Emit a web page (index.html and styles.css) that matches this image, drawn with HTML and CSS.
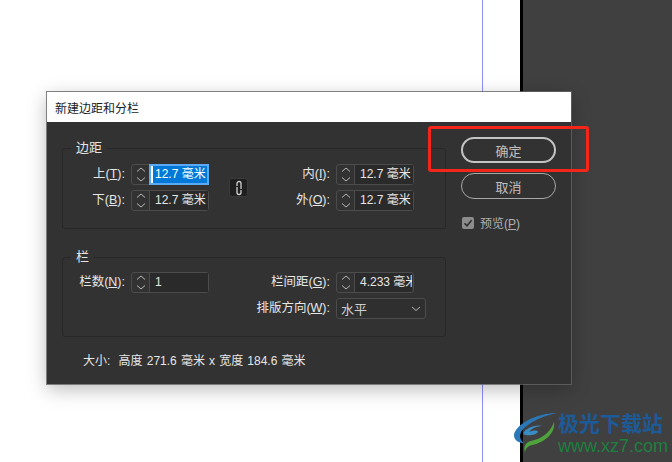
FILE: index.html
```html
<!DOCTYPE html>
<html lang="zh-CN">
<head>
    <meta charset="UTF-8">
    <title>新建边距和分栏</title>
    <link rel="stylesheet" href="styles.css">
</head>
<body>
    <div class="stage">
        <div class="page"><div class="guide"></div></div>
        <div class="pasteboard"></div>

        <div class="dialog">
            <div class="title">新建边距和分栏</div>
            <div class="content">
                <div class="left">
                    <!-- MARGINS -->
                    <fieldset class="group">
                        <legend>边距</legend>
                        <div class="grid">
                            <label class="lbl">上(<u>T</u>):</label>
                            <div class="spin">
                                <span class="arrows"><svg width="18" height="19" viewBox="0 0 18 19"><path d="M5 6.5 9 3l4 3.5M5 12.5 9 16l4-3.5"/></svg></span>
                                <span class="val focus"><span class="sel">12.7 毫米</span></span>
                            </div>
                            <div class="link">
                                <svg width="10" height="16" viewBox="0 0 10 16"><path d="M3 6V3.5a2 2 0 0 1 4 0V9M7 10v2.5a2 2 0 0 1-4 0V7"/></svg>
                            </div>
                            <label class="lbl lbl2">内(<u>I</u>):</label>
                            <div class="spin">
                                <span class="arrows"><svg width="18" height="19" viewBox="0 0 18 19"><path d="M5 6.5 9 3l4 3.5M5 12.5 9 16l4-3.5"/></svg></span>
                                <span class="val">12.7 毫米</span>
                            </div>

                            <label class="lbl">下(<u>B</u>):</label>
                            <div class="spin">
                                <span class="arrows"><svg width="18" height="19" viewBox="0 0 18 19"><path d="M5 6.5 9 3l4 3.5M5 12.5 9 16l4-3.5"/></svg></span>
                                <span class="val">12.7 毫米</span>
                            </div>
                            <label class="lbl lbl2">外(<u>O</u>):</label>
                            <div class="spin">
                                <span class="arrows"><svg width="18" height="19" viewBox="0 0 18 19"><path d="M5 6.5 9 3l4 3.5M5 12.5 9 16l4-3.5"/></svg></span>
                                <span class="val">12.7 毫米</span>
                            </div>
                        </div>
                    </fieldset>
                    <!-- COLUMNS -->
                    <fieldset class="group group-cols">
                        <legend>栏</legend>
                        <div class="grid">
                            <label class="lbl">栏数(<u>N</u>):</label>
                            <div class="spin">
                                <span class="arrows"><svg width="18" height="19" viewBox="0 0 18 19"><path d="M5 6.5 9 3l4 3.5M5 12.5 9 16l4-3.5"/></svg></span>
                                <span class="val">1</span>
                            </div>
                            <label class="lbl lbl2 wide">栏间距(<u>G</u>):</label>
                            <div class="spin">
                                <span class="arrows"><svg width="18" height="19" viewBox="0 0 18 19"><path d="M5 6.5 9 3l4 3.5M5 12.5 9 16l4-3.5"/></svg></span>
                                <span class="val clip">4.233 毫米</span>
                            </div>
                            <label class="lbl lbl2 full">排版方向(<u>W</u>):</label>
                            <div class="select">
                                <span>水平</span>
                                <svg width="10" height="6" viewBox="0 0 10 6"><path d="M1 1l4 3.5L9 1"/></svg>
                            </div>
                        </div>
                    </fieldset>
                    <div class="size">大小: &nbsp;高度 271.6 毫米 x 宽度 184.6 毫米</div>
                </div>
                <div class="right">
                    <button class="btn primary">确定</button>
                    <button class="btn">取消</button>
                    <div class="preview">
                        <span class="check"><svg width="12" height="12" viewBox="0 0 12 12"><path d="M2.5 6.2 5 8.7l4.6-5.4"/></svg></span>
                        <span>预览(<u>P</u>)</span>
                    </div>
                </div>
            </div>
        </div>

        <div class="highlight"></div>

        <div class="watermark">
            <svg class="wm-logo" width="45" height="42" viewBox="0 0 45 42">
                <path class="s1" d="M44 1C30 1 11 7 3 18c-5 7 0 13 8 13C4 26 7 18 15 13 23 7 34 3 44 1Z"/>
                <path class="s2" d="M10 22c2-6 12-10 20-8-6 0-11 2-14 6 4-2 9-2 9 0-3 4-11 4-15 2Z"/>
                <path class="s3" d="M41 10c2 11-10 21-22 23-4 1-6 3-7 7-2-5 1-10 6-11 9-2 19-7 23-19Z"/>
            </svg>
            <div class="wm-text">
                <div class="wm-cn">极光下载站</div>
                <div class="wm-url">www.xz7.com</div>
            </div>
        </div>
    </div>
</body>
</html>
```

FILE: styles.css
```css
* {
    box-sizing: border-box;
}
body {
    margin: 0;
    font-family: "Liberation Sans", "Noto Sans CJK SC", sans-serif;
    font-size: 12px;
    color: #e6e6e6;
}
.stage {
    position: relative;
    display: flex;
    width: 672px;
    height: 462px;
    overflow: hidden;
}
.page {
    position: relative;
    width: 523px;
    background: #fff;
    border-right: 3px solid #000;
}
.guide {
    position: absolute;
    left: 482px;
    top: 0;
    bottom: 0;
    width: 1px;
    background: #8f8fff;
}
.pasteboard {
    flex: 1;
    background: #404040;
}
.dialog {
    position: absolute;
    left: 47px;
    top: 92px;
    width: 524px;
    height: 292px;
    background: #323232;
    box-shadow: 0 0 0 1px rgba(100, 100, 100, 0.8), 0 5px 18px rgba(0, 0, 0, 0.28);
}
.title {
    height: 30px;
    padding: 7px 0 0 8px;
    background: #fff;
    color: #1a1a1a;
}
.content {
    display: flex;
    padding: 19px 0 0 15px;
}
.left {
    width: 384px;
}
.group {
    margin: 0;
    padding: 9px 0 0 0;
    height: 88px;
    border: 1px solid #272727;
    border-radius: 3px;
    min-width: 0;
}
.group legend {
    margin-left: 8px;
    padding: 0 5px;
    height: 14px;
    line-height: 14px;
    font-size: 13px;
}
.group-cols {
    height: 87px;
    margin-top: 21px;
    padding-top: 8px;
}
.grid {
    display: grid;
    grid-template-columns: 68px 78px 20px 19px 88px 90px;
    grid-auto-rows: 21px;
    row-gap: 5px;
}
.lbl {
    padding-right: 6px;
    font-size: 12.5px;
    line-height: 21px;
    text-align: right;
    white-space: nowrap;
}
.lbl2 {
    grid-column: 5;
}
.wide {
    grid-column: 3 / 6;
}
.full {
    grid-column: 1 / 6;
}
.spin {
    display: flex;
    width: 78px;
    height: 21px;
    border: 1px solid #4c4c4c;
    border-radius: 3px;
}
.arrows {
    width: 18px;
    border-right: 1px solid #4c4c4c;
}
.arrows svg {
    display: block;
}
.arrows path,
.select path {
    fill: none;
    stroke: #b8b8b8;
    stroke-width: 1;
}
.val {
    flex: 1;
    min-width: 0;
    padding-left: 5px;
    background: #2a2a2a;
    line-height: 19px;
    white-space: nowrap;
}
.clip {
    overflow: hidden;
    margin-right: 1px;
}
.focus {
    margin: -1px;
    padding: 0;
    border: 2px solid #5aa9f2;
    line-height: 17px;
    background: #fff;
}
.sel {
    display: block;
    margin-left: 2px;
    padding-left: 2px;
    background: #0078d7;
    color: #fff;
}
.link {
    grid-column: 4;
    grid-row: 1 / 3;
    align-self: center;
    display: flex;
    align-items: center;
    justify-content: center;
    width: 19px;
    height: 19px;
    background: #1f1f1f;
    border: 1px solid #3a3a3a;
    border-radius: 3px;
}
.link path {
    fill: none;
    stroke: #d0d0d0;
    stroke-width: 1.3;
}
.select {
    display: flex;
    align-items: center;
    justify-content: space-between;
    height: 21px;
    padding: 0 4px 0 4px;
    border: 1px solid #4c4c4c;
    border-radius: 3px;
    background: #2f2f2f;
    color: #d0d0d0;
    font-size: 13px;
}
.size {
    margin-top: 14px;
    padding-left: 21px;
    white-space: nowrap;
    word-spacing: 0.8px;
}
.right {
    width: 95px;
    margin: -4px 0 0 15px;
}
.btn {
    display: block;
    width: 95px;
    height: 26px;
    padding: 0;
    margin-bottom: 10px;
    font: inherit;
    font-size: 13px;
    color: #c0c0c0;
    background: transparent;
    border: 1px solid #a8a8a8;
    border-radius: 13px;
}
.primary {
    border: 2px solid #c4c4c4;
}
.preview {
    display: flex;
    align-items: center;
    gap: 6px;
    margin: 15px 0 0 1px;
    color: #b0b0b0;
}
.check {
    width: 12px;
    height: 12px;
    background: #8c8c8c;
    border-radius: 2px;
}
.check svg {
    display: block;
}
.check path {
    fill: none;
    stroke: #2e2e2e;
    stroke-width: 1.6;
}
.highlight {
    position: absolute;
    left: 428px;
    top: 126px;
    width: 161px;
    height: 46px;
    border: 3px solid #f4261a;
    border-radius: 3px;
}
.watermark {
    position: absolute;
    left: 513px;
    top: 412px;
    display: flex;
    gap: 0;
}
.wm-logo .s1 {
    fill: #2a78b8;
}
.wm-logo .s2 {
    fill: #3c8cc4;
}
.wm-logo .s3 {
    fill: #4fa33c;
}
.wm-cn {
    font-size: 21px;
    line-height: 24px;
    font-weight: bold;
    color: #1d5a98;
}
.wm-url {
    font-family: "Liberation Sans", sans-serif;
    font-size: 18px;
    line-height: 20px;
    color: #1d7f40;
}
```
